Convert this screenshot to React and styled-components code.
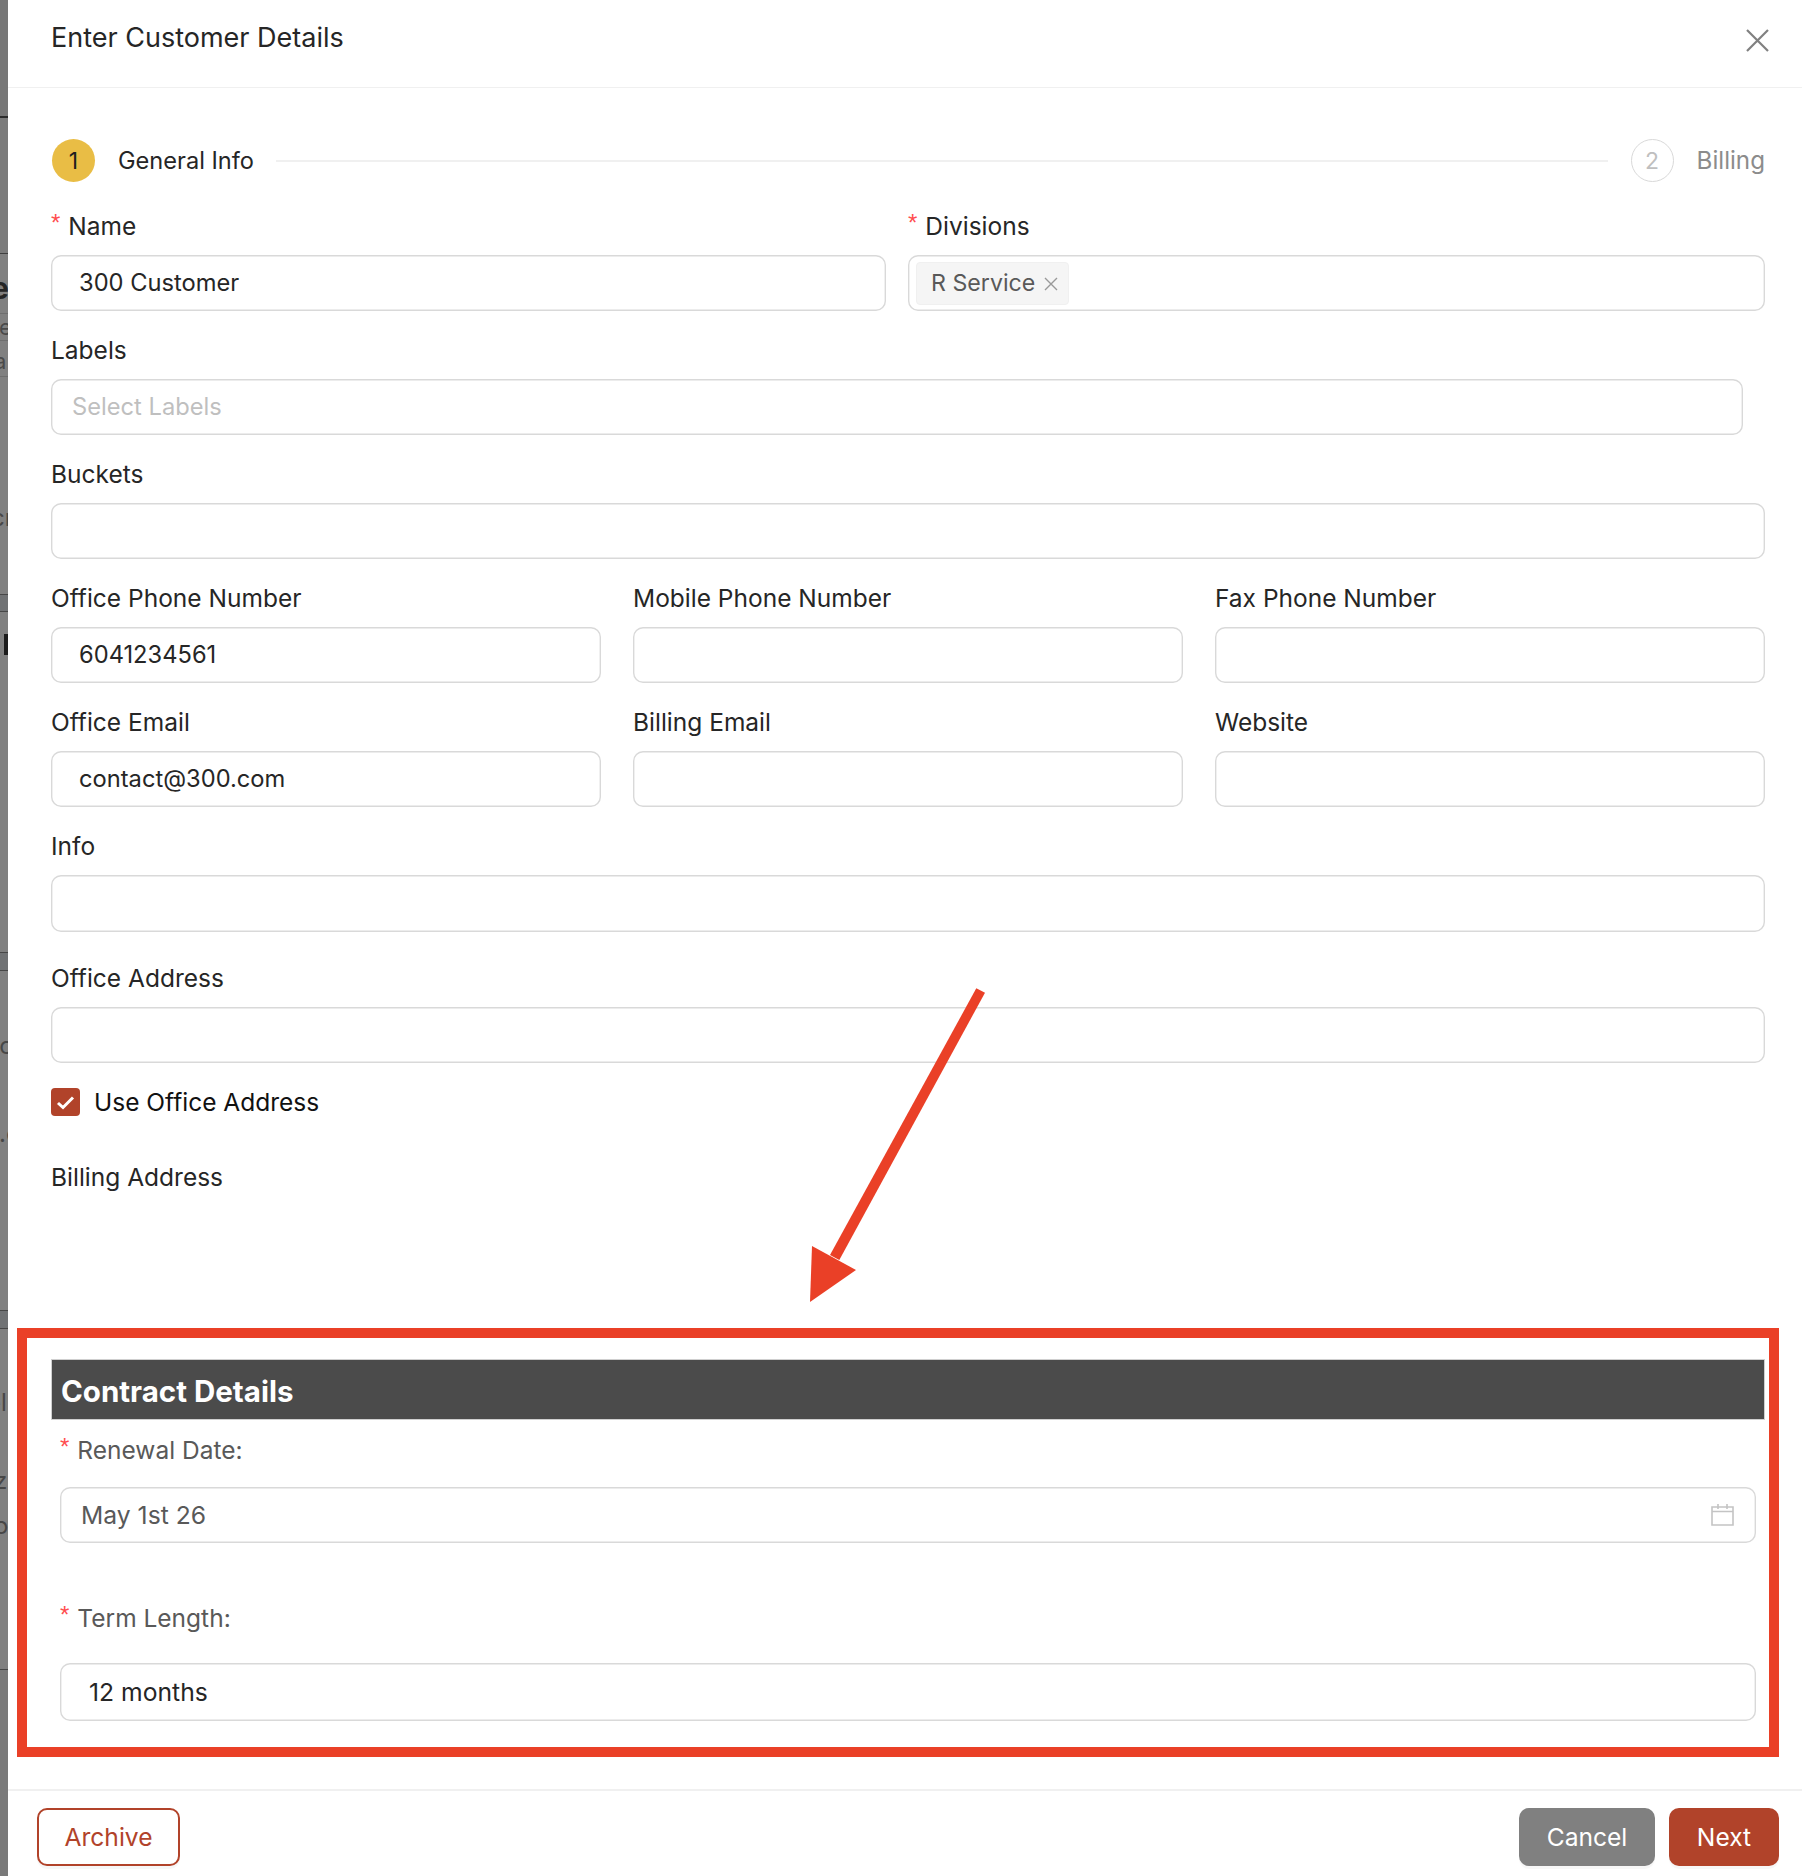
import React from "react";
import styled, { createGlobalStyle } from "styled-components";

const Global = createGlobalStyle`
  html, body { margin: 0; padding: 0; background: #fff; }
  * { box-sizing: border-box; }
  body { font-family: Inter, "Liberation Sans", sans-serif; color: #262626; }
`;

const Page = styled.div`
  position: relative;
  display: flex;
  width: 1802px;
  height: 1876px;
  overflow: hidden;
  background: #fff;
`;

const Strip = styled.div`
  display: flex;
  flex-direction: column;
  flex: none;
  width: 8px;
  height: 100%;
  background: #808080;
`;

const StripRow = styled.div`
  display: flex;
  align-items: center;
  flex: none;
  height: ${(p) => p.$h}px;
  background: ${(p) => p.$bg || "transparent"};
  border-bottom: ${(p) => (p.$line ? `1px solid ${p.$line}` : "none")};
  overflow: hidden;
  white-space: nowrap;
  font-size: ${(p) => p.$size || 22}px;
  font-weight: ${(p) => p.$weight || 400};
  color: ${(p) => p.$color || "#4a4a4a"};
`;

const StripText = styled.span`
  margin-left: ${(p) => p.$shift}px;
`;

const StripMark = styled.span`
  width: 4px;
  height: 100%;
  margin-left: 4px;
  background: #1c1c1c;
`;

const Modal = styled.div`
  display: flex;
  flex-direction: column;
  flex: 1;
  min-width: 0;
  background: #fff;
`;

const Header = styled.header`
  display: flex;
  justify-content: space-between;
  flex: none;
  height: 88px;
  padding: 22px 33px 0 43px;
  border-bottom: 1px solid #f0f0f0;
`;

const Title = styled.h1`
  margin: 0;
  font-size: 27px;
  font-weight: 400;
  line-height: 32px;
  color: #262626;
`;

const CloseIcon = styled.svg`
  display: block;
  width: 23px;
  height: 23px;
  margin-top: 7px;
`;

const Body = styled.main`
  flex: 1;
  min-height: 0;
  padding: 51px 37px 0 43px;
`;

const Stepper = styled.div`
  display: flex;
  align-items: center;
  height: 43px;
  margin-bottom: 24px;
  padding-left: 1px;
`;

const StepCircle = styled.span`
  display: flex;
  align-items: center;
  justify-content: center;
  flex: none;
  width: 43px;
  height: 43px;
  border-radius: 50%;
  font-size: 23px;
  background: ${(p) => (p.$active ? "#e9bd45" : "#fff")};
  border: ${(p) => (p.$active ? "none" : "1px solid #d9d9d9")};
  color: ${(p) => (p.$active ? "#1f1f1f" : "#bfbfbf")};
`;

const StepLabel = styled.span`
  margin-left: 23px;
  font-size: ${(p) => (p.$active ? 23.6 : 24.2)}px;
  color: ${(p) => (p.$active ? "#262626" : "#8c8c8c")};
`;

const StepLine = styled.span`
  flex: 1;
  height: 2px;
  margin: 0 23px 0 22px;
  background: #f0f0f0;
`;

const Row = styled.div`
  display: grid;
  grid-template-columns: ${(p) => p.$cols};
  column-gap: ${(p) => p.$gap}px;
  margin-bottom: ${(p) => (p.$after === undefined ? 19 : p.$after)}px;
`;

const Field = styled.div`
  min-width: 0;
`;

const Label = styled.label`
  display: flex;
  align-items: center;
  height: 38px;
  margin-bottom: 11px;
  padding-top: 1px;
  font-size: 24.5px;
  color: #262626;
`;

const Star = styled.span`
  margin-right: 8px;
  margin-top: -5px;
  font-size: 24px;
  color: #ff4d4f;
  font-family: "Liberation Sans", sans-serif;
`;

const Input = styled.div`
  display: flex;
  align-items: center;
  height: ${(p) => p.$h || 56}px;
  margin-right: ${(p) => p.$inset || 0}px;
  padding: 0 ${(p) => p.$pad || 28}px 1px;
  background: #fff;
  box-shadow: inset 0 0 0 1.4px #d9d9d9;
  border-radius: 10px;
  font-size: ${(p) => p.$size || 23.7}px;
  color: ${(p) => p.$color || "#262626"};
`;

const Placeholder = styled.span`
  margin-left: -7px;
  color: #bfbfbf;
`;

const TagInput = styled(Input)`
  padding: 0 8px;
`;

const Tag = styled.span`
  display: flex;
  align-items: center;
  height: 43px;
  padding: 0 10px 0 14px;
  background: #f5f5f5;
  border: 1px solid #f0f0f0;
  border-radius: 4px;
  font-size: 23.2px;
  color: #595959;
`;

const TagClose = styled.svg`
  display: block;
  width: 14px;
  height: 14px;
  margin-left: 9px;
  margin-top: 2px;
`;

const CheckRow = styled.div`
  display: flex;
  align-items: center;
  height: 28px;
  margin-top: 25px;
  margin-bottom: 42px;
  font-size: 24.5px;
  color: #111;
`;

const CheckBox = styled.span`
  display: flex;
  align-items: center;
  justify-content: center;
  flex: none;
  width: 29px;
  height: 28px;
  margin-right: 14px;
  background: #b1432a;
  border-radius: 4px;
`;

const PlainLabel = styled.div`
  display: flex;
  align-items: center;
  height: 38px;
  margin-bottom: 132px;
  font-size: 24.5px;
  color: #262626;
`;

const Callout = styled.section`
  height: 429px;
  margin: 0 -14px 0 -34px;
  padding: 21px 4px 0 24px;
  border: 10px solid #ea4027;
`;

const SectionBar = styled.h2`
  display: flex;
  align-items: center;
  height: 61px;
  margin: 0;
  padding: 3px 0 0 9px;
  background: #4b4b4b;
  border: 1px solid #cfcfcf;
  font-size: 29.5px;
  font-weight: 700;
  color: #fff;
`;

const SectionFields = styled.div`
  padding: 10px 9px 0 9px;
`;

const SectionLabel = styled(Label)`
  margin-bottom: ${(p) => p.$gap}px;
  color: #595959;
`;

const DateInput = styled(Input)`
  justify-content: space-between;
  margin-bottom: ${(p) => p.$after}px;
  padding: 0 22px 0 21px;
`;

const CalendarIcon = styled.svg`
  display: block;
  width: 23px;
  height: 23px;
  margin-top: -2px;
`;

const Footer = styled.footer`
  display: flex;
  justify-content: space-between;
  align-items: flex-start;
  flex: none;
  height: 87px;
  padding: 17px 23px 0 29px;
  border-top: 2px solid #f0f0f0;
`;

const Actions = styled.div`
  display: flex;
  gap: 14px;
`;

const Button = styled.button`
  height: 58px;
  width: ${(p) => p.$w}px;
  padding: 0;
  border-radius: 10px;
  border: ${(p) => (p.$outline ? "2px solid #b1432a" : "none")};
  background: ${(p) => (p.$outline ? "#fff" : p.$bg)};
  color: ${(p) => (p.$outline ? "#b1432a" : "#fff")};
  font-family: inherit;
  font-size: 24.6px;
  box-shadow: 0 3px 0 rgba(0, 0, 0, 0.03);
`;

const ArrowOverlay = styled.svg`
  position: absolute;
  top: 0;
  left: 0;
  width: 1802px;
  height: 1876px;
  pointer-events: none;
`;

const dim = "#474747";

const stripRows = [
  { h: 116, bg: "#777" },
  { h: 2, bg: "#2c2c2c" },
  { h: 136, bg: "#7b7b7b", line: "#3f3f3f" },
  { h: 11 },
  { h: 46, text: "e", size: 30, weight: 700, color: "#262626", shift: -9 },
  { h: 3, line: "#6e6e6e" },
  { h: 27, text: "ue", size: 22, shift: -14, line: "#6e6e6e" },
  { h: 5 },
  { h: 31, text: "a", size: 22, shift: -6, line: "#6e6e6e" },
  { h: 120 },
  { h: 40, text: "cr", size: 24, shift: -9, color: dim },
  { h: 58, line: dim },
  { h: 17, bg: "#707274", line: dim },
  { h: 22 },
  { h: 21, mark: true },
  { h: 298, line: dim },
  { h: 18, bg: "#707274", line: dim },
  { h: 54 },
  { h: 40, text: "nc", size: 24, shift: -15, color: dim },
  { h: 48 },
  { h: 40, text: ".c", size: 24, shift: -1, color: dim },
  { h: 158, line: dim },
  { h: 18, bg: "#707274", line: dim },
  { h: 53 },
  { h: 40, text: "el", size: 24, shift: -13, color: dim },
  { h: 38 },
  { h: 40, text: "z", size: 24, shift: -6, color: dim },
  { h: 5 },
  { h: 40, text: "o", size: 24, shift: -6, color: dim },
  { h: 125, line: dim },
  { h: 206, bg: "#7a7a7a" },
];

const App = () => (
  <Page>
    <Global />
    <Strip>
      {stripRows.map((r, i) => (
        <StripRow key={i} $h={r.h} $bg={r.bg} $line={r.line} $size={r.size} $weight={r.weight} $color={r.color}>
          {r.text && <StripText $shift={r.shift}>{r.text}</StripText>}
          {r.mark && <StripMark />}
        </StripRow>
      ))}
    </Strip>
    <Modal>
      <Header>
        <Title>Enter Customer Details</Title>
        <CloseIcon viewBox="0 0 23 23">
          <path d="M1 1 L22 22 M22 1 L1 22" stroke="#808080" strokeWidth="2.2" fill="none" />
        </CloseIcon>
      </Header>
      <Body>
        <Stepper>
          <StepCircle $active>1</StepCircle>
          <StepLabel $active>General Info</StepLabel>
          <StepLine />
          <StepCircle>2</StepCircle>
          <StepLabel>Billing</StepLabel>
        </Stepper>
        <Row $cols="835fr 857fr" $gap={22}>
          <Field>
            <Label><Star>*</Star>Name</Label>
            <Input>300 Customer</Input>
          </Field>
          <Field>
            <Label><Star>*</Star>Divisions</Label>
            <TagInput>
              <Tag>
                R Service
                <TagClose viewBox="0 0 14 14">
                  <path d="M1 1 L13 13 M13 1 L1 13" stroke="#999" strokeWidth="1.4" fill="none" />
                </TagClose>
              </Tag>
            </TagInput>
          </Field>
        </Row>
        <Row $cols="1fr" $gap={0}>
          <Field>
            <Label>Labels</Label>
            <Input $inset={22}><Placeholder>Select Labels</Placeholder></Input>
          </Field>
        </Row>
        <Row $cols="1fr" $gap={0}>
          <Field>
            <Label>Buckets</Label>
            <Input />
          </Field>
        </Row>
        <Row $cols="1fr 1fr 1fr" $gap={32}>
          <Field>
            <Label>Office Phone Number</Label>
            <Input>6041234561</Input>
          </Field>
          <Field>
            <Label>Mobile Phone Number</Label>
            <Input />
          </Field>
          <Field>
            <Label>Fax Phone Number</Label>
            <Input />
          </Field>
        </Row>
        <Row $cols="1fr 1fr 1fr" $gap={32}>
          <Field>
            <Label>Office Email</Label>
            <Input>contact@300.com</Input>
          </Field>
          <Field>
            <Label>Billing Email</Label>
            <Input />
          </Field>
          <Field>
            <Label>Website</Label>
            <Input />
          </Field>
        </Row>
        <Row $cols="1fr" $gap={0} $after={26}>
          <Field>
            <Label>Info</Label>
            <Input $h={57} />
          </Field>
        </Row>
        <Row $cols="1fr" $gap={0} $after={0}>
          <Field>
            <Label>Office Address</Label>
            <Input />
          </Field>
        </Row>
        <CheckRow>
          <CheckBox>
            <svg width="19" height="15" viewBox="0 0 19 15">
              <path d="M2 8 L7 12.5 L17 2.5" stroke="#fff" strokeWidth="3" fill="none" />
            </svg>
          </CheckBox>
          Use Office Address
        </CheckRow>
        <PlainLabel>Billing Address</PlainLabel>
        <Callout>
          <SectionBar>Contract Details</SectionBar>
          <SectionFields>
            <SectionLabel $gap={19}><Star>*</Star>Renewal Date:</SectionLabel>
            <DateInput $after={55} $color="#595959" $size={24.7}>
              May 1st 26
              <CalendarIcon viewBox="0 0 23 23">
                <path d="M1 4 H22 V22 H1 Z M1 8.5 H22 M7 1 V6 M16 1 V6" stroke="#c4c4c4" strokeWidth="1.6" fill="none" />
              </CalendarIcon>
            </DateInput>
            <SectionLabel $gap={27}><Star>*</Star>Term Length:</SectionLabel>
            <Input $h={58} $pad={29} $size={24.7}>12 months</Input>
          </SectionFields>
        </Callout>
      </Body>
      <Footer>
        <Button $outline $w={143}>Archive</Button>
        <Actions>
          <Button $bg="#808080" $w={136}>Cancel</Button>
          <Button $bg="#b1432a" $w={110}>Next</Button>
        </Actions>
      </Footer>
    </Modal>
    <ArrowOverlay viewBox="0 0 1802 1876">
      <polygon points="976.3,988.3 985,992.7 839.3,1260 830,1255" fill="#ea4027" />
      <polygon points="812,1246 856,1270 810,1302" fill="#ea4027" />
    </ArrowOverlay>
  </Page>
);

export default App;
